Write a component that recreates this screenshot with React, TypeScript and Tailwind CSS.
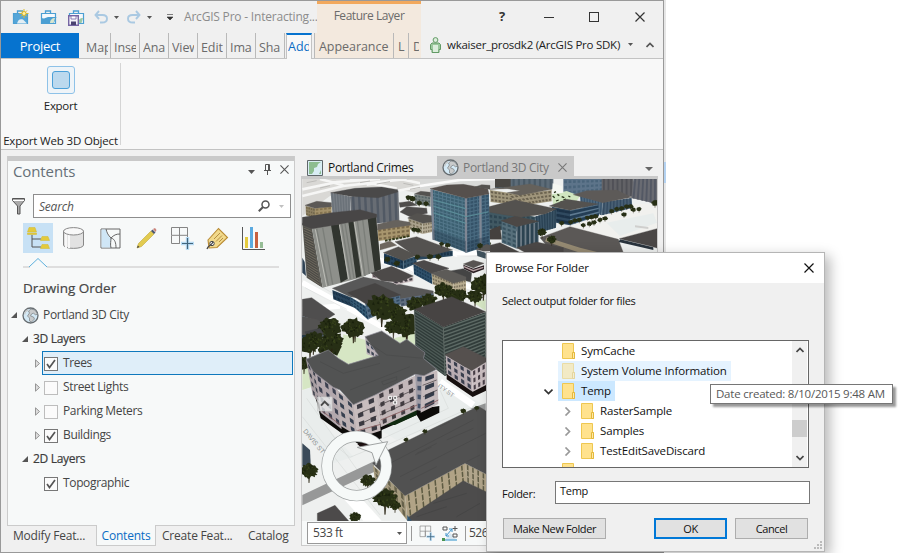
import type { ReactNode } from 'react';

type Pt = [number, number];
type Quad = [Pt, Pt, Pt, Pt];

const pts = (list: Pt[]) => list.map((p) => p[0].toFixed(1) + ',' + p[1].toFixed(1)).join(' ');

/* Point inside a facade; corners run top-left, top-right, bottom-right, bottom-left. */
function at(q: Quad, u: number, v: number): Pt {
  const mix = (i: 0 | 1) =>
    (q[0][i] * (1 - u) + q[1][i] * u) * (1 - v) + (q[3][i] * (1 - u) + q[2][i] * u) * v;
  return [mix(0), mix(1)];
}

function Wall({ q, fill, win, rows = 3, cols = 4, fx = 0.6, fy = 0.5 }: {
  q: Quad; fill: string; win: string; rows?: number; cols?: number; fx?: number; fy?: number;
}) {
  const cells: Pt[][] = [];
  for (let r = 0; r < rows; r++) {
    for (let c = 0; c < cols; c++) {
      const u0 = (c + (1 - fx) / 2) / cols;
      const u1 = (c + (1 + fx) / 2) / cols;
      const v0 = (r + (1 - fy) / 2) / rows;
      const v1 = (r + (1 + fy) / 2) / rows;
      cells.push([at(q, u0, v0), at(q, u1, v0), at(q, u1, v1), at(q, u0, v1)]);
    }
  }
  return (
    <g>
      <polygon points={pts(q)} fill={fill} />
      {cells.map((cell, i) => <polygon key={i} points={pts(cell)} fill={win} />)}
    </g>
  );
}

function Roof({ p, fill = '#54524f' }: { p: string; fill?: string }) {
  return <polygon points={p} fill={fill} stroke={fill} strokeWidth="1" />;
}

/* Repeatable pseudo-random value between 0 and 1. */
function noise(n: number) {
  const s = Math.sin(n * 12.9898) * 43758.5453;
  return s - Math.floor(s);
}

function Tree({ x, y, r }: { x: number; y: number; r: number }) {
  const ring: Pt[] = [];
  for (let i = 0; i < 34; i++) {
    const a = (i / 34) * Math.PI * 2;
    const k = r * (0.78 + 0.38 * noise(i + x * 3 + y));
    ring.push([x + Math.cos(a) * k * 1.05, y - r * 0.9 + Math.sin(a) * k * 0.85]);
  }
  const tufts = Array.from({ length: r < 12 ? 3 : 26 }, (_, i) => {
    const a = noise(i * 7 + x) * Math.PI * 2;
    const d = Math.sqrt(noise(i * 3 + y)) * r * 0.85;
    return { x: x + Math.cos(a) * d, y: y - r * 0.9 + Math.sin(a) * d * 0.8, up: i % 2 === 0 };
  });
  return (
    <g>
      <path d={`M${x - r * 0.07} ${y - r * 0.5}L${x} ${y + r * 0.55}L${x + r * 0.1} ${y - r * 0.5}z`} fill="#2a2413" stroke="#2a2413" strokeWidth={r * 0.06} />
      <polygon points={pts(ring)} fill="#272f15" />
      {tufts.map((t, i) => (
        <path key={i} d={`M${t.x} ${t.y - r * 0.15}l${r * 0.09} ${r * 0.24}l${-r * 0.2} ${-r * 0.05}z`} fill={t.up ? '#38431c' : '#1a210d'} />
      ))}
    </g>
  );
}

const smallTrees: Pt[] = [[575, 112], [590, 106], [605, 104], [620, 98], [633, 98], [612, 122], [640, 108], [657, 106], [452, 145], [465, 140], [478, 138], [502, 132], [515, 130], [527, 128], [490, 154], [508, 150], [522, 146], [540, 138], [555, 134], [425, 148]];

function CityScene() {
  return (
    <svg className="block h-[342px] w-[355px]" viewBox="302 179 355 342" preserveAspectRatio="none">
      <rect x="302" y="179" width="355" height="342" fill="#eef0ef" />
      {/* distant blocks */}
      <g transform="translate(300 176) scale(.33333)">
        <path d="M7 9H400V60L290 40L90 60L7 120Z" fill="#d9d8d5" />
        <path d="M7 40L110 18L240 9M7 60L130 30L320 9M60 9L130 28M150 9L290 38M200 26L300 9L400 30M290 45L395 25" stroke="#f6f6f5" strokeWidth="8" fill="none" />
        <path d="M20 20l30-6M60 36l30-7M180 20l30-5M230 24l40-7M330 40l40-8M310 22l30 6" stroke="#bdbcb9" strokeWidth="3" />
      </g>
      {/* skyline behind the glass tower */}
      <g transform="translate(420 176) scale(.33333)">
        <path d="M0 9H230V40H0Z" fill="#d9dad9" />
        <path d="M0 30L120 12L230 9" stroke="#fbfbfb" strokeWidth="8" fill="none" />
        <Wall q={[[225, 9], [400, 9], [400, 40], [225, 36]]} fill="#5d6c78" win="#4a5a66" rows={1} cols={11} fx={0.4} fy={1} />
        <path d="M225 9H272V34H225Z" fill="#494743" />
        <Wall q={[[430, 9], [550, 9], [550, 45], [430, 60]]} fill="#5d748a" win="#4a647a" rows={3} cols={9} />
        <Wall q={[[545, 9], [640, 9], [640, 62], [545, 48]]} fill="#626266" win="#505157" rows={1} cols={7} fx={0.4} fy={1} />
        <Wall q={[[640, 9], [711, 9], [711, 84], [634, 66]]} fill="#696b72" win="#535864" rows={1} cols={6} fx={0.45} fy={1} />
        <path d="M395 55L440 45L480 60L470 75L400 88Z" fill="#d0e6c0" />
        <path d="M398 22L425 30L430 50L396 54Z" fill="#f4f7f2" />
        <path d="M398 60l6 5M412 55l6 4M425 62l8 3M408 75l8-3M430 72l8-3M402 50l6-3M445 60l6 3M420 80l6-3" stroke="#29341a" strokeWidth="4" />
        <path d="M545 112L640 84L711 84V160L600 190L450 155Z" fill="#f1f1ee" />
        <path d="M560 140L700 112L711 140L600 180Z" fill="#e8edec" />
        <path d="M645 148l40 5v6l-40-5z" fill="#cfcfcd" />
        <Wall q={[[210, 42], [300, 56], [300, 88], [212, 78]]} fill="#a0977c" win="#6a624f" rows={3} cols={8} />
        <Wall q={[[265, 58], [395, 42], [395, 76], [300, 90]]} fill="#a0967c" win="#6a624f" rows={3} cols={10} />
        <Roof p="210,40 330,24 395,40 300,58 262,50 300,44 262,38" fill="#65615b" />
        <Wall q={[[480, 60], [548, 78], [545, 118], [482, 92]]} fill="#4f6a80" win="#38526a" rows={1} cols={8} fx={0.4} fy={1} />
        <Wall q={[[548, 78], [635, 66], [637, 96], [545, 118]]} fill="#485f73" win="#334a60" rows={1} cols={9} fx={0.4} fy={1} />
        <Roof p="460,56 500,44 590,42 635,64 548,80" fill="#5d5a58" />
        <Wall q={[[395, 92], [450, 102], [450, 148], [408, 140]]} fill="#304a60" win="#1c3247" rows={3} cols={3} fx={1} />
        <Wall q={[[450, 102], [535, 86], [537, 120], [450, 148]]} fill="#5f7b91" win="#243e55" rows={3} cols={1} fx={1} fy={0.65} />
        <Roof p="388,90 440,70 535,84 450,103" />
        <Wall q={[[205, 95], [345, 122], [350, 170], [205, 160]]} fill="#415963" win="#2e4551" rows={4} cols={10} />
        <Wall q={[[345, 122], [410, 101], [408, 155], [350, 172]]} fill="#3c5567" win="#2a4254" rows={1} cols={8} fx={0.5} fy={1} />
        <Roof p="200,94 285,72 410,99 375,114 300,124 205,108" />
        <Roof p="200,165 240,150 245,190 205,190" fill="#45413e" />
        <Wall q={[[245, 136], [290, 150], [290, 218], [245, 200]]} fill="#566f7b" win="#38525f" rows={5} cols={3} />
        <Wall q={[[290, 150], [356, 138], [356, 200], [290, 218]]} fill="#707e88" win="#2c4351" rows={1} cols={5} fx={0.6} fy={1} />
        <Roof p="243,134 285,121 356,136 290,152" fill="#4c4846" />
        <Roof p="360,185 450,152 595,190 610,230 400,232" fill="#5b5856" />
        <path d="M380 184L480 215L540 230H480L375 196Z" fill="#958a72" />
        <Roof p="598,188 711,158 711,216 690,210" fill="#4a4746" />
        <path d="M600 190L700 214V222L596 198Z" fill="#29333c" />
        <Roof p="170,218 240,200 305,232 170,236" fill="#4a4745" />
        <Roof p="290,215 350,198 430,215 430,232 320,232" fill="#4b4847" />
        {smallTrees.map((t, i) => <Tree key={i} x={t[0]} y={t[1]} r={7.5} />)}
        <Tree x={366} y={180} r={13} /><Tree x={395} y={202} r={13} /><Tree x={180} y={215} r={8} /><Tree x={205} y={210} r={8} />
        <Tree x={705} y={90} r={10} />
      </g>
      <g transform="translate(300 176) scale(.33333)">
        {/* streets */}
        <path d="M7 320L260 460M230 250L570 350M350 190L470 235L570 225M7 400L120 390" stroke="#fff" strokeWidth="16" fill="none" />
        <path d="M15 335L140 400M60 330L240 430M250 240L340 290M470 240L560 240" stroke="#d4d6d6" strokeWidth="1.5" fill="none" />
        <path d="M130 475L230 500L345 470L350 540H120ZM520 380L557 370V405Z" fill="#d6e6c4" />
        <Wall q={[[17, 90], [45, 97], [45, 128], [18, 118]]} fill="#8d8062" win="#6f6349" />
        <Wall q={[[45, 97], [95, 90], [95, 125], [45, 128]]} fill="#a4926b" win="#857450" />
        <Roof p="15,88 50,76 95,80 95,92 45,97" fill="#5c5956" />
        <Wall q={[[343, 55], [392, 62], [392, 92], [345, 84]]} fill="#76807e" win="#566264" cols={5} />
        <Roof p="343,54 362,46 392,49 392,62" />
        <Roof p="297,80 330,76 352,88 300,94" fill="#4f4d4b" />
        <Roof p="300,108 320,92 380,97 382,112 330,122" fill="#4e4c4b" />
        <Wall q={[[325, 127], [368, 141], [368, 174], [327, 160]]} fill="#aaa28d" win="#777059" />
        <Wall q={[[368, 141], [397, 136], [397, 168], [368, 174]]} fill="#b2a993" win="#7d745f" />
        <Roof p="323,126 350,112 396,119 396,138 368,142" />
        <Tree x={325} y={72} r={8} /><Tree x={338} y={76} r={9} /><Tree x={358} y={88} r={8} /><Tree x={378} y={90} r={8} /><Tree x={342} y={168} r={8} /><Tree x={354} y={170} r={8} />
        {/* slab towers */}
        <Wall q={[[92, 50], [150, 62], [152, 130], [98, 120]]} fill="#7b8187" win="#6b7279" rows={1} cols={7} fy={1} />
        <Wall q={[[150, 62], [295, 44], [298, 135], [155, 150]]} fill="#686d74" win="#515964" rows={1} cols={8} fx={0.4} fy={1} />
        <Roof p="92,50 165,37 245,33 293,41 293,48 235,65 150,61" fill="#4a4949" />
        <Wall q={[[232, 158], [330, 145], [330, 182], [235, 195]]} fill="#a8966e" win="#7a694a" cols={7} rows={3} />
        <Roof p="232,145 290,132 330,139 330,148 232,162" fill="#66625d" />
        <path d="M255 194L330 180" stroke="#333a1b" strokeWidth="6" strokeDasharray="8 3" />
        <polygon points="7,140 36,157 68,335 20,305" fill="#5b5a54" />
        <Wall q={[[10, 152], [34, 162], [60, 330], [24, 305]]} fill="#4b4a46" win="#726c60" rows={20} cols={1} fx={1} fy={0.4} />
        <polygon points="36,157 228,122 243,280 180,305 68,335" fill="#8e908b" />
        <path d="M93 148L117 144L143 308L122 320ZM145 138L160 135L184 300L168 306ZM203 128L228 122L243 280L224 288Z" fill="#31352f" />
        <path d="M50 158L85 328M68 155L98 325M125 144L152 310M135 142L162 308M172 134L195 300M188 130L208 294" stroke="#7b7e79" strokeWidth="4" />
        <path d="M46 160L80 332M163 137L189 300M118 145L146 310" stroke="#bcbdb7" strokeWidth="3" />
        <Roof p="7,124 95,110 180,101 230,115 230,124 105,147 36,158 7,147" fill="#484646" />
        <polygon points="7,245 14,258 18,300 7,290" fill="#2f4254" />
        {/* glass tower */}
        <Wall q={[[392, 40], [498, 66], [500, 230], [398, 190]]} fill="#53778a" win="#3c6071" rows={15} cols={9} fx={0.75} fy={0.65} />
        <Wall q={[[498, 66], [567, 54], [570, 208], [500, 230]]} fill="#4a6b81" win="#355268" rows={15} cols={6} fx={0.7} fy={0.65} />
        <path d="M395 42L401 192M498 66V230M541 59L542 216" stroke="#7f8794" strokeWidth="7" />
        <path d="M400 90L498 122L565 108M400 110L498 142M400 72L498 98" stroke="#5d949c" strokeWidth="2.5" fill="none" />
        <path d="M400 160L498 195V228L400 192ZM503 195L566 180V206L503 228Z" fill="#1f3547" fillOpacity=".35" />
        <Roof p="390,38 440,27 490,25 563,38 567,54 498,67" fill="#56504d" />
        <Roof p="525,33 545,26 570,28 570,40 560,38" />
        {/* low rises */}
        <Wall q={[[340, 222], [458, 225], [458, 240], [350, 252]]} fill="#2b475d" win="#1c3448" rows={1} cols={12} />
        <Roof p="285,197 350,182 458,222 380,242 345,240" fill="#545250" />
        <Wall q={[[252, 232], [310, 252], [310, 280], [252, 262]]} fill="#26455e" win="#1a334a" rows={2} cols={6} />
        <Wall q={[[310, 252], [350, 240], [350, 262], [310, 280]]} fill="#33526a" win="#223c52" rows={2} cols={4} />
        <Roof p="250,230 295,212 350,238 310,254" />
        <Roof p="240,205 270,195 290,208 240,222" fill="#6d675e" />
        <Tree x={262} y={258} r={9} /><Tree x={290} y={270} r={9} /><Tree x={390} y={250} r={9} /><Tree x={415} y={250} r={9} /><Tree x={443} y={215} r={8} /><Tree x={425} y={210} r={7} /><Tree x={352} y={250} r={8} />
        <Wall q={[[340, 263], [395, 292], [397, 325], [342, 295]]} fill="#2f506a" win="#1d3a52" rows={3} cols={7} />
        <Roof p="338,262 372,253 447,277 395,293" fill="#4c4a4a" />
        <Roof p="450,285 490,278 515,290 512,318 480,310" fill="#444" />
        <Wall q={[[395, 292], [460, 318], [460, 350], [398, 325]]} fill="#aca184" win="#716955" rows={3} cols={8} />
        <Wall q={[[460, 318], [498, 308], [498, 345], [460, 350]]} fill="#b8ac90" win="#7d7460" rows={3} cols={5} />
        <Roof p="393,292 440,280 498,303 498,312 460,322" fill="#5d5b58" />
        <path d="M490 266L520 278L552 268V280L520 292L492 278Z" fill="#2c2024" /><path d="M492 272L520 284L550 274" stroke="#b4a0a2" strokeWidth="4" fill="none" /><Roof p="490,264 520,253 552,262 520,276" fill="#585452" />
        <Roof p="528,220 560,205 570,208 570,225 550,226" fill="#585654" /><path d="M530 222L557 230V248L532 240Z" fill="#40515c" /><Tree x={540} y={217} r={9} />
        <Wall q={[[97, 342], [148, 362], [205, 412], [100, 370]]} fill="#28445b" win="#1a3146" rows={2} cols={8} />
        <Roof p="97,337 190,303 400,345 400,358 300,385 150,362" fill="#585858" />
        <Wall q={[[150, 362], [205, 395], [205, 432], [152, 385]]} fill="#355a73" win="#1b3750" rows={3} cols={6} />
        <Wall q={[[195, 382], [300, 358], [302, 385], [205, 430]]} fill="#556f87" win="#314a61" rows={3} cols={7} />
        <Wall q={[[300, 368], [400, 352], [400, 372], [302, 392]]} fill="#5f6d7f" win="#3d4d61" rows={2} cols={7} />
        <Roof p="143,350 225,322 302,357 198,384" fill="#464443" />
        <Wall q={[[216, 292], [245, 313], [300, 322], [216, 305]]} fill="#bdb2b4" win="#50484e" rows={1} />
        <Wall q={[[270, 315], [340, 302], [340, 316], [290, 326]]} fill="#cdc2c3" win="#403a41" rows={1} />
        <Roof p="213,291 275,271 340,300 300,318 245,314" fill="#4d4a49" />
        <Roof p="7,370 35,365 105,415 65,440 7,420" fill="#4f4e4e" />
        <path d="M7 420L65 440L110 450V470L7 505Z" fill="#4f5d68" /><Roof p="7,422 50,430 80,450 55,480 7,478" fill="#545352" /><path d="M7 478L60 480V492L7 504Z" fill="#223b4e" />
        {/* street trees */}
        <Tree x={550} y={355} r={34} /><Tree x={525} y={380} r={22} /><Tree x={480} y={378} r={22} /><Tree x={430} y={365} r={25} /><Tree x={455} y={375} r={20} />
        <Tree x={385} y={395} r={24} /><Tree x={345} y={405} r={24} /><Tree x={245} y={430} r={42} /><Tree x={290} y={440} r={30} />
        <Tree x={320} y={482} r={38} /><Tree x={280} y={475} r={24} /><Tree x={90} y={485} r={35} /><Tree x={160} y={485} r={33} /><Tree x={30} y={530} r={32} /><Tree x={90} y={545} r={34} />
      </g>
      <g transform="translate(300 330) scale(.33333)">
        <path d="M130 40H195L240 78L145 105L110 80ZM7 120L25 100L38 170L7 180Z" fill="#d6e6c4" />
        <Roof p="15,5 60,-5 70,10 60,25 20,20" fill="#434446" /><path d="M7 15L60 25V32L7 22Z" fill="#23384b" />
        <Tree x={95} y={60} r={32} /><Tree x={40} y={58} r={30} /><Tree x={12} y={120} r={22} /><Tree x={165} y={22} r={26} /><Tree x={320} y={15} r={24} />
        {/* ribbed office tower */}
        <Wall q={[[343, -62], [430, -10], [435, 138], [348, 75]]} fill="#303b39" win="#4d5a56" rows={15} cols={1} fx={1} fy={0.5} />
        <Wall q={[[430, -10], [557, -54], [557, 85], [435, 138]]} fill="#323d3b" win="#5d6a65" rows={14} cols={1} fx={1} fy={0.45} />
        <path d="M343 -62L348 75M430 -10L435 138" stroke="#5d6763" strokeWidth="3" />
        <Roof p="343,-62 455,-100 557,-55 430,-9" fill="#474443" />
        <Wall q={[[437, 76], [515, 122], [518, 185], [440, 132]]} fill="#b9adb2" win="#3a3f4e" rows={3} cols={4} fx={0.5} fy={0.6} />
        <Wall q={[[515, 122], [558, 96], [558, 165], [518, 185]]} fill="#cabec1" win="#483f47" rows={3} cols={3} fx={0.45} fy={0.6} />
        <path d="M440 132L518 185L558 165V182L518 201L440 148Z" fill="#17100f" />
        <Roof p="435,74 490,50 558,84 558,96 515,122" fill="#55504e" />
        {/* pavement and road markings */}
        <path d="M7 182L35 172L70 280L160 380L100 400L7 290ZM420 165L557 225L380 300L290 330L240 300L420 240Z" fill="#e9edec" />
        <path d="M7 260L240 555M20 205L200 460M420 180L445 235L250 325M250 350L530 225M110 350L150 382L215 355" stroke="#d3d7d6" strokeWidth="1.6" fill="none" />
        <path d="M420 155L520 225" stroke="#fff" strokeWidth="20" />
        <path d="M7 495L222 394V426L7 526ZM510 236L557 220V240Z" fill="#979898" />
        <path d="M125 500L180 500L245 572H190Z" fill="#fff" />
        <text x="8" y="304" transform="rotate(50 8 304)" fontFamily="Liberation Sans" fontSize="20" fill="#8b8f90">DAVIS ST</text>
        <text x="412" y="170" transform="rotate(36 412 170)" fontFamily="Liberation Sans" fontSize="18" fill="#8b8f90">ITY ST</text>
        <path d="M7 340L30 360L32 400L7 410Z" fill="#3b4a59" />
        {/* apartment block */}
        <path d="M38 180L50 215L62 265L125 310L180 345L245 325V300L350 255L362 275L418 248V228L350 238L165 300Z" fill="#0c0b09" />
        <path d="M285 285L350 255V240L245 285Z" fill="#102a10" />
        <Wall q={[[195, 22], [237, 65], [237, 88], [200, 72]]} fill="#beb5bb" win="#3e4654" rows={2} cols={3} />
        <Wall q={[[18, 88], [48, 128], [62, 225], [38, 195]]} fill="#a99fa3" win="#3a3f4a" rows={4} cols={2} fx={0.45} />
        <Wall q={[[45, 125], [112, 178], [125, 298], [62, 248]]} fill="#b3a8ad" win="#3c4050" rows={4} cols={3} fx={0.45} />
        <Wall q={[[108, 176], [162, 222], [172, 318], [122, 288]]} fill="#bcb1b3" win="#374050" rows={4} cols={2} fx={0.45} />
        <Wall q={[[160, 223], [230, 192], [242, 302], [172, 325]]} fill="#c8bdbe" win="#3c3b43" rows={4} cols={2} fx={0.45} />
        <Wall q={[[228, 190], [345, 137], [352, 240], [242, 292]]} fill="#c2b7b9" win="#433e43" rows={4} cols={4} fx={0.42} />
        <Wall q={[[345, 133], [372, 135], [364, 243], [350, 240]]} fill="#9e9aa3" win="#45536a" rows={4} cols={1} fx={0.5} />
        <Wall q={[[366, 137], [412, 121], [415, 222], [362, 248]]} fill="#c5babc" win="#343b49" rows={4} cols={1} fx={0.55} />
        <path d="M242 270L352 225M172 302L242 283M364 235L415 210M62 240L122 285" stroke="#8b5f60" strokeWidth="2.5" />
        <path d="M178 250L225 230M238 226L345 178M368 166L410 150M185 280L230 258M240 255L345 208M370 200L412 180" stroke="#3b3538" strokeWidth="2" />
        <polygon points="18,88 85,60 115,85 145,103 235,76 195,20 245,3 300,40 320,28 375,68 370,85 410,118 372,137 345,133 225,195 160,224 120,180 100,172 40,125" fill="#525353" stroke="#8d8b95" strokeWidth="2" />
        <path d="M60 95L130 130L240 100M200 35L260 75L370 85M150 180L330 110M245 155l45-15v10l-40 15z" stroke="#4b4c4c" strokeWidth="2.5" fill="none" />
        {/* warehouse */}
        <Wall q={[[218, 405], [315, 495], [322, 572], [225, 450]]} fill="#a69b7f" win="#66614b" rows={3} cols={5} fx={0.4} fy={0.75} />
        <Wall q={[[315, 497], [495, 400], [500, 455], [322, 565]]} fill="#b1a386" win="#5d5a42" rows={3} cols={9} fx={0.22} fy={0.8} />
        <Wall q={[[495, 400], [558, 432], [558, 490], [497, 455]]} fill="#b1a58b" win="#605d47" rows={3} cols={4} fx={0.3} fy={0.8} />
        <Roof p="218,400 265,360 535,229 558,242 558,432 495,400 315,497" fill="#515151" />
        <path d="M270 400L520 270M300 440L557 310M350 370l60-30M345 375l50-24M330 450l80-40M440 330l80-35M500 395L540 375M420 290l30-15" stroke="#494949" strokeWidth="2.5" />
        <Roof p="322,572 325,562 490,452 558,485 558,575" fill="#4d4c4c" />
        <path d="M400 520L500 490M350 560L440 530M470 560L540 520" stroke="#454545" strokeWidth="2.5" />
        <path d="M322 555L335 572H322Z" fill="#305673" />
        <Roof p="52,550 105,526 148,575 52,575" fill="#4c4a4a" />
        <Tree x={27} y={445} r={25} /><Tree x={203} y={470} r={20} /><Tree x={255} y={535} r={34} /><Tree x={285} y={540} r={16} /><Tree x={165} y={575} r={16} />
        <Tree x={318} y={335} r={7} /><Tree x={375} y={310} r={7} /><Tree x={490} y={250} r={8} /><Tree x={530} y={240} r={7} />
        {/* navigator */}
        <path d="M172 342L195 338L225 350L185 355Z" fill="#1c0f10" />
        <circle cx="170" cy="408" r="89" fill="none" stroke="#9da1a1" strokeWidth="34" />
        <circle cx="170" cy="408" r="89" fill="none" stroke="#f6f9f8" strokeWidth="30" />
        <path d="M172 352L263 335L228 405L216 368Z" fill="#f6f9f8" stroke="#8f9393" strokeWidth="2.5" />
        <rect x="53" y="201" width="43" height="42" fill="#eef0f0" fillOpacity=".75" stroke="#c9caca" strokeWidth="2" />
        <path d="M63 227L74 215L86 227" stroke="#4a4a4a" strokeWidth="6" fill="none" />
        <path d="M266 199h9v9h-9zM281 199h9v9h-9zM281 213h9v9h-9z" fill="#6c6c6c" stroke="#fff" strokeWidth="3" />
      </g>
    </svg>
  );
}

function Caret({ className = 'text-[#555]' }: { className?: string }) {
  return <svg className={'h-[3px] w-[5px] shrink-0 ' + className} viewBox="0 0 5 3"><path d="M0 0h5L2.5 3z" fill="currentColor" /></svg>;
}

function Briefcase({ kind }: { kind: 'new' | 'open' | 'save' }) {
  return (
    <svg className="h-[17px] w-[17px] shrink-0" viewBox="0 0 17 17" fill="none">
      <path d="M5.500 4V2h5v2" stroke="#4b9fd3" strokeWidth="1.300" />
      <path d="M1.500 4.500h14v10h-14z" fill={kind === 'new' ? '#54a5d8' : '#f5f9fc'} stroke="#4b9fd3" strokeWidth="1.200" />
      {kind === 'new' && <path d="M5 14.500c1-4 3-5 6-4l4 4z" fill="#e3eef4" />}
      {kind === 'open' && <path d="M1 15V9l3 .5 4-1.500h8.500L13.500 15z" fill="#4b9fd3" />}
      {kind !== 'new' && <path d="M10 14c0-3 2-5 5-5l-1.500 5z" fill={kind === 'save' ? '#9cc8a5' : '#d7e5cf'} />}
      {kind === 'new' && <><path d="M12 0v9M7.500 4.500h9M9 1.500l6 6M15 1.500l-6 6" stroke="#d8bc35" /><circle cx="12" cy="4.500" r="2" fill="#fff1a6" stroke="#d8b52e" /></>}
      {kind === 'save' && <><path d="M.7 6.700h9.600v9.600H.700z" fill="#f4f2f9" stroke="#7565a3" strokeWidth="1.400" /><path d="M3 7h5v3H3z" fill="#fff" stroke="#7565a3" strokeWidth=".8" /><path d="M3 12.500h5V16H3z" fill="#4a4270" /></>}
    </svg>
  );
}

function Undo({ flip = false }: { flip?: boolean }) {
  return (
    <svg className={'h-[14px] w-[14px] shrink-0 ' + (flip ? '-scale-x-100' : '')} viewBox="0 0 14 14" fill="none" stroke="#aac9e2" strokeWidth="1.900">
      <path d="M5 1L1.500 5L5 9M1.500 5h7c3 0 4.500 1.500 4.500 3.700C13 11 11 12.500 8 12.500H6" />
    </svg>
  );
}

function Globe({ className = '' }: { className?: string }) {
  return (
    <svg className={'h-[17px] w-[17px] shrink-0 ' + className} viewBox="0 0 17 17">
      <circle cx="8.500" cy="8.500" r="7.500" fill="#d4e9f5" stroke="#666c70" strokeWidth="1.300" />
      <path d="M9 2l4 1 2.500 4-2 1-2-2-2 1-1 2 3 1 1 2-3 3-2-1 0-3-2-2 2-3-1-2z" fill="#c9cbcc" stroke="#84898c" strokeWidth=".8" />
      <path d="M2 6l2-3 2-1 0 2-2 1-1 3z" fill="#c5c7c8" />
    </svg>
  );
}

function X({ className }: { className: string }) {
  return <svg className={'shrink-0 ' + className} viewBox="0 0 10 10"><path d="M.5.5l9 9M9.500.5l-9 9" stroke="currentColor" strokeWidth="1.200" fill="none" /></svg>;
}

function Folder({ faded = false }: { faded?: boolean }) {
  return (
    <svg className={'h-4 w-[13px] shrink-0 ' + (faded ? 'opacity-50' : '')} viewBox="0 0 13 16">
      <path d="M.5.500h11v9h1v6h-12z" fill="#ffe28d" stroke="#eec750" />
      <path d="M10.500 9.500h2v6h-2z" fill="#ffe9a8" stroke="#e4b93c" />
    </svg>
  );
}

function RibbonTab({ children, className = 'w-[29px] pl-[3px]' }: { children: ReactNode; className?: string }) {
  return (
    <div className={'flex h-[25px] shrink-0 items-center overflow-hidden border-r border-[#b9b9b9] pt-[4px] ' + className}>
      <span className="w-[22px] overflow-hidden whitespace-nowrap text-[12.5px] leading-4 tracking-[-0.1px]">{children}</span>
    </div>
  );
}

function Check({ on }: { on: boolean }) {
  return (
    <span className={'mt-[2px] flex h-[14px] w-[14px] shrink-0 items-center justify-center border bg-[#fbfbfb] ' + (on ? 'border-[#777]' : 'border-[#bdbdbd]')}>
      {on && <svg className="h-[10px] w-[10px]" viewBox="0 0 10 10"><path d="M1 5l2.500 3.500L9 1" stroke="#555" strokeWidth="1.700" fill="none" /></svg>}
    </span>
  );
}

function Layer({ name, on, selected = false, arrow = true }: { name: string; on: boolean; selected?: boolean; arrow?: boolean }) {
  return (
    <div className="flex h-6 shrink-0 items-center pl-[27px]">
      <svg className="h-[9px] w-[5px] shrink-0" viewBox="0 0 5 9">{arrow && <path d="M.5.800L4.500 4.500L.5 8.200z" fill="#ddd" stroke="#8c8c8c" strokeWidth=".9" />}</svg>
      <div className={'ml-[2px] flex h-6 w-[251px] items-center border pl-px ' + (selected ? 'border-[#0f78bd] bg-[#dfeef9]' : 'border-transparent')}>
        <Check on={on} />
        <span className="ml-[5px] text-[12px] leading-4 tracking-[-0.35px] text-[#454545]">{name}</span>
      </div>
    </div>
  );
}

function Expanded() {
  return <svg className="h-[6px] w-[6px] shrink-0" viewBox="0 0 6 6"><path d="M6 0v6H0z" fill="#555" /></svg>;
}

function GroupRow({ name }: { name: string }) {
  return (
    <div className="flex h-6 shrink-0 items-center pl-[14px]">
      <Expanded /><span className="ml-[5px] text-[12px] tracking-[-0.3px] text-[#3c3c3c] [-webkit-text-stroke:0.2px_#3c3c3c]">{name}</span>
    </div>
  );
}

function GridPlus() {
  return (
    <svg className="h-full w-full" viewBox="0 0 24 24" fill="none">
      <path d="M1.500 1.500h16v7.800h-16zM1.500 9.500v8h8M9.500 1.500v16M9.500 17.500V9.500M17.500 9v4" stroke="#858585" />
      <path d="M17.500 11v13M11 17.500h13" stroke="#b9dcf4" strokeWidth="3.400" /><path d="M17.500 12v11M12 17.500h11" stroke="#42657c" strokeWidth="1.200" />
    </svg>
  );
}

function ContentsPane() {
  return (
    <section className="flex w-[288px] shrink-0 flex-col">
      <div className="flex h-[370px] flex-col border-x border-b border-[#cbcbcb] bg-[#f7f9f9]">
        <div className="h-[5px] shrink-0 bg-[#c9c9c9]" />
        <header className="flex h-[21px] shrink-0 items-center pl-[5px] text-[#555]">
          <h1 className="-mt-px w-[235px] text-[15px] leading-5 tracking-[-0.1px] text-[#667078]">Contents</h1>
          <svg className="mt-px h-1 w-[7px]" viewBox="0 0 7 4"><path d="M0 0h7L3.500 4z" fill="#555" /></svg>
          <svg className="-mt-1 ml-[9px] h-[11px] w-[7px]" viewBox="0 0 7 11" fill="none"><path d="M1.500 6V.5h4V6M0 6.500h7M3.500 7v4M4.500 1v5" stroke="#555" /></svg>
          <X className="-mt-1 ml-[9px] h-[9px] w-[9px]" />
        </header>
        <div className="mt-[12px] flex h-6 shrink-0 items-center pl-[4px]">
          <svg className="h-[17px] w-[13px]" viewBox="0 0 13 17"><path d="M.5.500h12v2L8 8v8H5.500V8L.5 2.500z" fill="#aaa" stroke="#555" /><path d="M1 2.500h11" stroke="#fff" /></svg>
          <div className="ml-[8px] flex h-6 w-[258px] items-center border border-[#8d8d8d] bg-white pl-[5px]">
            <span className="mt-px w-[219px] text-[12px] italic tracking-[-0.2px] text-[#555]">Search</span>
            <svg className="h-3 w-3" viewBox="0 0 12 12" fill="none" stroke="#555"><circle cx="7.500" cy="4.500" r="3.500" strokeWidth="1.500" /><path d="M5 7L.8 11.200" strokeWidth="2" /></svg>
            <Caret className="ml-[9px] text-[#c0c0c0]" />
          </div>
        </div>
        <div className="mt-[5px] flex h-[30px] shrink-0 items-center pl-[15px]">
          <div className="flex h-[30px] w-[30px] items-center justify-center bg-[#c7e1f5]">
            <svg className="h-[23px] w-[23px]" viewBox="0 0 23 23"><path d="M5 8v12h9M5 12h9" stroke="#555" fill="none" /><path d="M2 .5h6l1.500 4.500H.5zM.5 6h9v1.500h-9zM15 9.500h6l1.500 4h-9zM15 17.500h6l1.500 4h-9z" fill="#e3ca3c" stroke="#d2b92e" strokeWidth=".5" /></svg>
          </div>
          <svg className="ml-[10px] h-[22px] w-[21px]" viewBox="0 0 21 22"><path d="M.5 4v14c0 4.500 20 4.500 20 0V4z" fill="#e2e2e2" stroke="#888" /><path d="M3 7v14M6 7v14" stroke="#f8f8f8" strokeWidth="2" /><ellipse cx="10.500" cy="4.300" rx="10" ry="3.700" fill="#f8f8f8" stroke="#888" /></svg>
          <svg className="ml-[16px] h-[21px] w-[21px]" viewBox="0 0 21 21"><path d="M1 1h19v19H1z" fill="#f7f9f9" stroke="#666" /><path d="M1.500 1.500H6c1 4 2 6 5 9 0 3-1 6 0 9H1.500z" fill="#cfe6f6" /><path d="M6 1c1 4 2 6 5 9 0 3-1 6 0 10M11 10c3-3 5-4 9-4M11 10c4 1 5 5 5 10" stroke="#666" fill="none" /></svg>
          <svg className="ml-[15px] h-[21px] w-[21px]" viewBox="0 0 21 21"><path d="M1 20l1.500-4.500L15 3l3 3L5.500 18.500z" fill="#e2cb50" stroke="#c2a93c" strokeWidth=".6" /><path d="M15 3l1.500-1.500 3 3L18 6z" fill="#4d5870" /><path d="M17 1l2-1 1.500 2-1 2z" fill="#ca8178" /><path d="M1 20l.8-2.500 1.700 1.600z" fill="#444" /></svg>
          <div className="ml-[13px] h-6 w-6"><GridPlus /></div>
          <svg className="ml-[12px] h-[23px] w-[23px]" viewBox="0 0 23 23"><path d="M2 13L12.500 1.500l9 9L11 20.500l-8 .5z" fill="#f1d98b" stroke="#b98b34" strokeWidth="1.100" /><path d="M8 12l6-6M10 14.500l6-6M13 15l4-4" stroke="#b48e44" /><circle cx="6" cy="16.500" r="2.200" fill="#fff" stroke="#444" /><path d="M1 22c1-4 4-3 6-7" stroke="#444" fill="none" strokeWidth="1.200" /></svg>
          <svg className="ml-[13px] h-[23px] w-[23px]" viewBox="0 0 23 23"><path d="M.5 0v22.500H23" stroke="#555" fill="none" /><path d="M3 10h3v11H3z" fill="#e5cb3e" /><path d="M8 0h3v21H8z" fill="#5baae0" /><path d="M13 5h3v16h-3z" fill="#c7603f" /><path d="M18 15h3v6h-3z" fill="#96bd96" /></svg>
        </div>
        <svg className="mt-[4px] ml-[15px] h-[11px] w-[256px] shrink-0" viewBox="0 0 256 11" fill="none"><path d="M0 10h7M24 10h232" stroke="#dedede" strokeWidth="2" /><path d="M6 10l9-8.500L24 10" stroke="#5cb0dd" /></svg>
        <h2 className="mt-[10px] ml-[15px] h-[20px] shrink-0 text-[13.5px] leading-5 text-[#454545] [-webkit-text-stroke:0.2px_#454545]">Drawing Order</h2>
        <div className="mt-[5px] flex h-6 shrink-0 items-center pl-[3px]"><Expanded /><Globe className="ml-[5px]" /><span className="ml-[4px] text-[12px] tracking-[-0.3px] text-[#454545]">Portland 3D City</span></div>
        <GroupRow name="3D Layers" />
        <Layer name="Trees" on selected />
        <Layer name="Street Lights" on={false} />
        <Layer name="Parking Meters" on={false} />
        <Layer name="Buildings" on />
        <GroupRow name="2D Layers" />
        <Layer name="Topographic" on arrow={false} />
      </div>
      <nav className="flex h-[21px] text-[12px] leading-5 tracking-[-0.2px] whitespace-nowrap text-[#454545]">
        <span className="w-[89px] pl-[6px]">Modify Feat...</span>
        <span className="-mt-px h-[21px] w-[60px] border border-t-0 border-[#cbcbcb] bg-[#f7f9f9] pt-px text-center text-[#0a6cc4]">Contents</span>
        <span className="w-[86px] pl-[6px]">Create Feat...</span>
        <span className="pl-[6px]">Catalog</span>
      </nav>
    </section>
  );
}

function MapPane() {
  return (
    <section className="ml-[6px] flex w-[357px] flex-col">
      <nav className="flex h-5 items-center text-[12px] leading-4 tracking-[-0.32px]">
        <svg className="mt-[3px] ml-[6px] h-4 w-4" viewBox="0 0 16 16"><path d="M.5.500h15v15H.5z" fill="#d9edf4" stroke="#60676a" /><path d="M2 2h12l-3 2-1 3-3 1 0 3-2 3H2z" fill="#8dbd91" /><path d="M12 14l2-4v4z" fill="#8dbd91" /></svg>
        <span className="ml-[5px] mt-[4px] w-[109px] whitespace-nowrap text-[#151515]">Portland Crimes</span>
        <div className="flex h-5 w-[137px] items-center bg-[#c9c9c9] pl-[5px] text-[#777]">
          <Globe className="mt-[3px]" /><span className="ml-[4px] mt-[4px] w-[91px] whitespace-nowrap">Portland 3D City</span><X className="mt-[3px] ml-[4px] h-[9px] w-[9px]" />
        </div>
        <svg className="mt-[5px] ml-[71px] h-1 w-[8px]" viewBox="0 0 8 4"><path d="M0 0h8L4 4z" fill="#666" /></svg>
      </nav>
      <div className="h-[3px] bg-[#c9c9c9]" />
      <div className="border-x border-[#c9c9c9]"><CityScene /></div>
      <footer className="flex h-[25px] items-center border-x border-b border-[#cbcbcb] bg-[#f7f9f9] text-[12px]">
        <div className="ml-[5px] flex h-[22px] w-[100px] items-center justify-between border border-[#999] bg-white pr-1 pl-[5px] tracking-[-0.4px] text-[#454545]">533 ft<Caret /></div>
        <span className="ml-[4px] h-[15px] w-px bg-[#999]" />
        <div className="ml-[7px] h-4 w-4"><GridPlus /></div>
        <svg className="ml-[7px] h-4 w-4" viewBox="0 0 16 16" fill="none"><path d="M3 15l5-7 7 7z" fill="#d7e7f1" /><path d="M1 15h14" stroke="#6eb2d9" strokeWidth="1.500" /><path d="M1 2h4v3H1zM11 9h4v3h-4zM13 1v5M10.500 3.500h5" stroke="#555" /><path d="M4 11l6-7M4 11V8M4 11h3M10 4v3M10 4H7" stroke="#3f94cb" /><path d="M0 13h3v3H0z" fill="#4a9450" /></svg>
        <span className="ml-[7px] h-[15px] w-px bg-[#999]" />
        <span className="ml-[3px] tracking-[-0.5px] text-[#454545]">526</span>
      </footer>
    </section>
  );
}

function ProWindow() {
  return (
    <main className="flex h-[553px] w-[664px] shrink-0 flex-col overflow-hidden border border-[#999] bg-[#f0f0f0]">
      <div className="flex h-8 shrink-0 items-center">
        <div className="flex h-full items-center pl-[11px]">
          <Briefcase kind="new" /><span className="w-[11px]" /><Briefcase kind="open" /><span className="w-[11px]" /><Briefcase kind="save" />
          <span className="w-[9px]" /><Undo /><Caret className="ml-[6px] text-[#555]" /><span className="w-[8px]" /><Undo flip /><Caret className="ml-[6px] text-[#555]" />
          <svg className="ml-[15px] h-[6px] w-[6px]" viewBox="0 0 6 6"><path d="M0 .5h6M0 3h6L3 6z" fill="#333" stroke="#333" strokeWidth=".6" /></svg>
        </div>
        <span className="ml-[11px] w-[133px] whitespace-nowrap text-[12px] tracking-[-0.2px] text-[#8c8c8c]">ArcGIS Pro - Interacting...</span>
        <div className="-mt-px h-[33px] w-[104px] border-t-4 border-[#f2a85c] bg-[#f3e9de] pt-[4px] text-center text-[12px] leading-4 tracking-[-0.45px] text-[#6b6b6b]">Feature Layer</div>
        <span className="ml-[78px] w-2 text-[13px] font-bold text-[#333]">?</span>
        <span className="ml-[37px] h-px w-[10px] bg-[#333]" />
        <span className="ml-[35px] h-[10px] w-[10px] border border-[#333]" />
        <X className="ml-[36px] h-[10px] w-[10px] text-[#333]" />
      </div>
      <div className="flex h-[26px] shrink-0 border-b border-[#c3c3c3] text-[#6b6b6b]">
        <div className="flex w-[78px] items-center justify-center bg-[#0673cf] pt-[3px] text-[13px] tracking-[-0.3px] text-white">Project</div>
        <RibbonTab className="w-[32px] pl-[7px]">Map</RibbonTab>
        <RibbonTab>Inse</RibbonTab>
        <RibbonTab>Ana</RibbonTab>
        <RibbonTab>View</RibbonTab>
        <RibbonTab>Edit</RibbonTab>
        <RibbonTab>Ima</RibbonTab>
        <RibbonTab>Sha</RibbonTab>
        <div className="ml-px h-[26px] w-[26px] shrink-0 overflow-hidden border-x border-t-2 border-x-[#c3c3c3] border-t-[#0673cf] bg-[#f8f8f8] pt-[4px] pl-px">
          <div className="w-[21px] overflow-hidden whitespace-nowrap text-[12.5px] leading-4 text-[#0a6cc4]">Add</div>
        </div>
        <span className="w-[3px] border-r border-[#b9b9b9]" />
        <div className="flex h-[25px] bg-[#f3e9de]">
          <span className="w-[79px] border-r border-[#b9b9b9] pt-[6px] pl-[4px] text-[12.5px] leading-4 tracking-[-0.05px]">Appearance</span>
          <span className="w-[15px] overflow-hidden border-r border-[#b9b9b9] pt-[6px] pl-1 text-[12.5px] leading-4"><span className="block w-[7px] overflow-hidden whitespace-nowrap">L</span></span>
          <span className="w-[12px] overflow-hidden pt-[6px] pl-[4px] text-[12.5px] leading-4"><span className="block w-[6px] overflow-hidden">D</span></span>
        </div>
        <svg className="mt-[4px] ml-[9px] h-[16px] w-[11px] shrink-0" viewBox="0 0 11 16"><circle cx="5.500" cy="3" r="2.400" fill="#dceddc" stroke="#629a65" /><path d="M.5 7.500L2 6h7l1.500 1.500v5H9v3H2v-3H.5z" fill="#9ac79c" stroke="#629a65" /><path d="M3 8h5v7H3z" fill="#dceddc" /></svg>
        <span className="mt-[4px] ml-[6px] w-[177px] whitespace-nowrap text-[11.5px] leading-4 tracking-[-0.25px] text-[#222]">wkaiser_prosdk2 (ArcGIS Pro SDK)</span>
        <Caret className="mt-[10px] ml-[4px] text-[#555]" />
        <svg className="mt-[9px] ml-[13px] h-[6px] w-[8px] shrink-0" viewBox="0 0 8 6"><path d="M.5 5L4 1.500L7.500 5" stroke="#555" strokeWidth="1.700" fill="none" /></svg>
      </div>
      <div className="flex h-[91px] shrink-0 border-b border-[#c3c3c3] bg-[#f8f8f8]">
        <div className="mt-1 flex h-[82px] w-[120px] flex-col items-center border-r border-[#d5d5d5] text-[11.5px] leading-4 text-[#222]">
          <div className="mt-[3px] flex h-7 w-7 shrink-0 items-center justify-center rounded-[3px] border border-[#8ec2e8] bg-[#eff4f8]"><span className="h-[18px] w-[18px] rounded-[3px] border border-[#4ba0d8] bg-[#bcd9ee]" /></div>
          <span className="mt-[4px] tracking-[-0.3px]">Export</span>
          <span className="mt-[19px] whitespace-nowrap tracking-[-0.17px]">Export Web 3D Object</span>
        </div>
      </div>
      <div className="mt-[6px] flex pl-[6px]"><ContentsPane /><MapPane /></div>
    </main>
  );
}

function TreeRow({ name, arrow, nested = false, tone = 'none' }: { name: string; arrow?: 'open' | 'closed'; nested?: boolean; tone?: 'none' | 'hover' | 'picked' }) {
  return (
    <div className={'flex h-5 shrink-0 items-center ' + (nested ? 'pl-[60px]' : 'pl-[41px]')}>
      <svg className="h-[9px] w-[9px] shrink-0" viewBox="0 0 9 9" fill="none" strokeWidth="1.700">
        {arrow === 'open' && <path d="M.5 2.500L4.500 6.500L8.500 2.500" stroke="#333" />}
        {arrow === 'closed' && <path d="M2.500.500L6.500 4.500L2.500 8.500" stroke="#999" />}
      </svg>
      <div className={'ml-[5px] flex h-5 items-center px-[4px] ' + (tone === 'hover' ? 'bg-[#e5f3ff]' : tone === 'picked' ? 'bg-[#cce8ff]' : '')}>
        <Folder faded={tone === 'hover'} /><span className="ml-[6px] whitespace-nowrap tracking-[-0.15px]">{name}</span>
      </div>
    </div>
  );
}

function BrowseDialog() {
  return (
    <section className="absolute top-[252px] left-[486px] flex h-[299.500px] w-[339px] flex-col border border-[#b5b5b5] bg-[#f0f0f0] text-[11.5px] leading-4 text-[#111] shadow-[5px_4px_12px_rgba(0,0,0,0.28)]">
      <header className="flex h-[30px] shrink-0 items-center justify-between bg-white pr-[10px] pl-[8px] text-[11.5px]"><span className="tracking-[-0.22px]">Browse For Folder</span><X className="h-[10px] w-[10px] text-[#111]" /></header>
      <p className="mt-[10px] ml-[15px] text-[11px] tracking-[-0.3px]">Select output folder for files</p>
      <div className="mt-[31px] ml-[15px] flex h-[128px] w-[307px] shrink-0 border border-[#666] bg-white">
        <div className="h-[126px] w-[289px] overflow-hidden">
          <TreeRow name="SymCache" />
          <TreeRow name="System Volume Information" tone="hover" />
          <TreeRow name="Temp" arrow="open" tone="picked" />
          <TreeRow name="RasterSample" arrow="closed" nested />
          <TreeRow name="Samples" arrow="closed" nested />
          <TreeRow name="TestEditSaveDiscard" arrow="closed" nested />
          <div className="pl-[59px] pt-[2px]"><Folder /></div>
        </div>
        <div className="flex w-[15px] flex-col items-center bg-[#f0f0f0] text-[#444]">
          <svg className="mt-[6px] h-[6px] w-[8px]" viewBox="0 0 8 6"><path d="M.5 5L4 1.500L7.500 5" stroke="currentColor" strokeWidth="1.700" fill="none" /></svg>
          <span className="mt-[67px] h-[17px] w-[15px] bg-[#cdcdcd]" />
          <svg className="mt-[18px] h-[6px] w-[8px]" viewBox="0 0 8 6"><path d="M.5 1L4 4.500L7.500 1" stroke="currentColor" strokeWidth="1.700" fill="none" /></svg>
        </div>
      </div>
      <div className="mt-[13px] flex h-[23px] shrink-0 pl-[15px] text-[11px] tracking-[-0.3px]">
        <span className="w-[53px] pt-[5px]">Folder:</span>
        <div className="h-[23px] w-[255px] border border-[#777] bg-white pt-[1px] pl-[4px]">Temp</div>
      </div>
      <div className="mt-[14px] flex h-[21px] shrink-0 pl-[16px] text-[11px] tracking-[-0.4px]">
        <button className="h-[21px] w-[103px] border border-[#adadad] bg-[#e1e1e1]">Make New Folder</button>
        <button className="ml-[48px] h-[21px] w-[73px] border-2 border-[#0078d7] bg-[#e1e1e1] leading-4">OK</button>
        <button className="ml-[8px] h-[21px] w-[73px] border border-[#adadad] bg-[#e1e1e1]">Cancel</button>
      </div>
      <svg className="absolute right-[2px] bottom-[2px] h-2 w-2" viewBox="0 0 8 8"><path d="M6 0h2v2H6zM3 3h2v2H3zM6 3h2v2H6zM0 6h2v2H0zM3 6h2v2H3zM6 6h2v2H6z" fill="#bbb" /></svg>
    </section>
  );
}

export default function App() {
  return (
    <div className="relative flex h-[553px] w-[898px] overflow-hidden bg-white font-['Open_Sans','Noto_Sans',sans-serif]">
      <ProWindow />
      <div className="flex h-[252px] w-[2px] flex-col bg-[#e6e6e6]"><span className="mt-[162px] h-[21px] bg-[#b4d2f1]" /></div>
      <BrowseDialog />
      <div className="absolute top-[384px] left-[710px] h-5 w-[183px] whitespace-nowrap border border-[#767676] bg-white pt-px pl-[5px] text-[11.5px] leading-4 tracking-[-0.22px] text-[#575757] shadow-[3px_3px_2px_rgba(0,0,0,0.4)]">Date created: 8/10/2015 9:48 AM</div>
    </div>
  );
}
